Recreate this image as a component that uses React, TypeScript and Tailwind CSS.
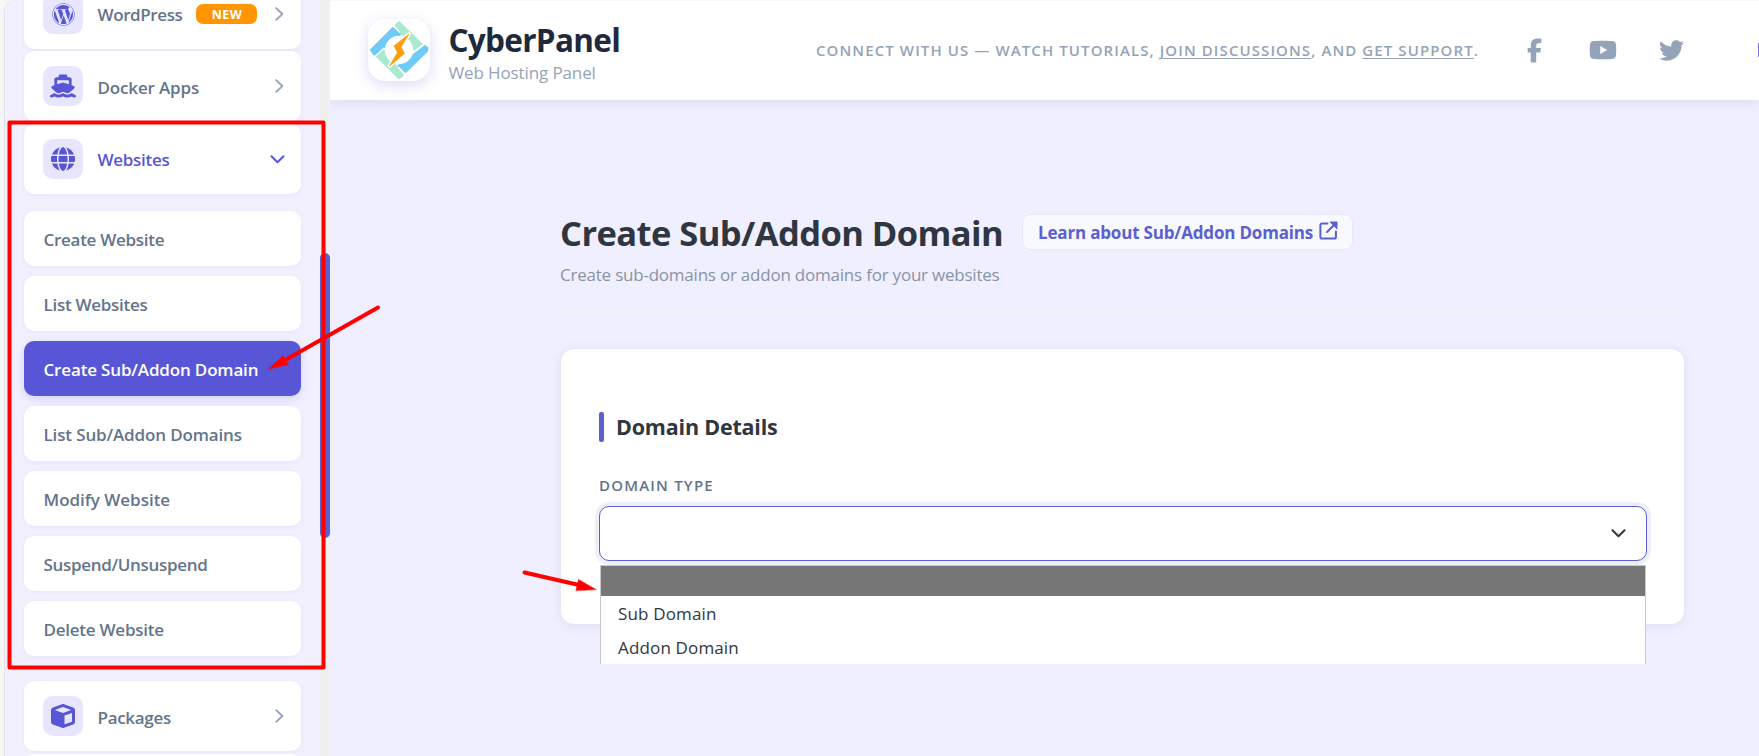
import type { ReactNode } from "react";
import {
  FaCube,
  FaFacebookF,
  FaGlobe,
  FaShip,
  FaTwitter,
  FaWordpress,
  FaYoutube,
} from "react-icons/fa6";

const submenu = [
  { label: "Create Website", tracking: "tracking-[-0.28px]" },
  { label: "List Websites", tracking: "tracking-[-0.28px]" },
  { label: "Create Sub/Addon Domain", tracking: "tracking-[-0.16px]", active: true },
  { label: "List Sub/Addon Domains", tracking: "tracking-[-0.14px]" },
  { label: "Modify Website", tracking: "tracking-[-0.03px]" },
  { label: "Suspend/Unsuspend", tracking: "tracking-[-0.32px]" },
  { label: "Delete Website", tracking: "tracking-[-0.24px]" },
];

function ChevronRight() {
  return (
    <svg className="mr-[2px] h-[14px] w-[9px]" viewBox="0 0 9 14" fill="none" stroke="#94a3b8" strokeWidth="1.8" strokeLinecap="round" strokeLinejoin="round">
      <path d="M1.2 1.2 7.4 7 1.2 12.8" />
    </svg>
  );
}

function ChevronDown({ stroke, className }: { stroke: string; className?: string }) {
  return (
    <svg className={"h-[9px] w-[15px] " + (className ?? "")} viewBox="0 0 15 9" fill="none" stroke={stroke} strokeWidth="2" strokeLinecap="round" strokeLinejoin="round">
      <path d="M1.5 1.2 7.5 7.3 13.5 1.2" />
    </svg>
  );
}

function MenuCard({ icon, label, tracking, open, badge }: { icon: ReactNode; label: string; tracking: string; open?: boolean; badge?: string }) {
  return (
    <div className="flex h-[70px] shrink-0 items-center rounded-[10px] bg-white pr-[15px] pl-[19px] shadow-[0_1px_4px_rgba(91,95,207,0.08)]">
      <div className="flex size-10 items-center justify-center rounded-[10px] bg-[#e8e6ff] text-[#5856d6]">{icon}</div>
      <span className={"ml-[14.5px] text-[17px] leading-6 font-semibold " + tracking + (open ? " pt-px text-[#5856d6]" : badge ? " pt-0.5 text-[#64748b]" : " pt-1 text-[#64748b]")}>{label}</span>
      {badge && (
        <span className="ml-[14px] flex h-5 w-[61px] items-center justify-center rounded-[7px] bg-[#ff9500] pt-px text-[12.5px] leading-5 font-bold tracking-[0.4px] text-white">{badge}</span>
      )}
      <div className="ml-auto">{open ? <ChevronDown stroke="#5856d6" className="mr-px" /> : <ChevronRight />}</div>
    </div>
  );
}

function Logo() {
  return (
    <div className="size-[62px] rounded-[17px] bg-white shadow-[0_4px_14px_rgba(91,95,207,0.22)]">
      <svg viewBox="0 0 62 62" className="size-full">
        <g strokeLinejoin="round" strokeWidth="2">
          <path d="M27.5 6.500 31 3.200 53.500 25 46.500 31.500Z" fill="#aae9cf" stroke="#aae9cf" />
          <path d="M9 37.500 15.500 31 35 56 31 59.200Z" fill="#aae9cf" stroke="#aae9cf" />
          <path d="M3 31 25 9 32 15.500 18 26 8.500 35.500 6 35.500Z" fill="#6ecbf5" stroke="#6ecbf5" />
          <path d="M57 27 59.500 29 59 32 37.500 53 30.500 46.500 44 37Z" fill="#6ecbf5" stroke="#6ecbf5" />
        </g>
        <circle cx="31" cy="31" r="14.2" fill="#fff" />
        <path d="M25.500 7 32 13.500M56.500 24.500 46 33M7 37.500 16 29M37.500 55.500 30 48" stroke="#fff" strokeWidth="1.4" />
        <path d="M41 15 26 27 29.500 33.500 21.500 47 36.500 34.500 33 28Z" fill="#ff9d0a" stroke="#fff" strokeWidth="3.6" strokeLinejoin="round" />
        <path d="M41 15 26 27 29.500 33.500 21.500 47 36.500 34.500 33 28Z" fill="#ff9d0a" stroke="#ff9d0a" strokeWidth="0.8" strokeLinejoin="round" />
      </svg>
    </div>
  );
}

function Sidebar() {
  return (
    <aside className="flex h-full w-[330px] shrink-0 bg-[#f6f6f6]">
      <div className="ml-[4px] h-full w-[316px] overflow-hidden rounded-tl-[12px] border-l border-[#e4e4e8] bg-[#f2f0ff]">
        <nav className="mt-[-21px] flex flex-col pr-[19px] pl-[19px]">
          <MenuCard icon={<FaWordpress size={23} />} label="WordPress" tracking="tracking-[-0.4px]" badge="NEW" />
          <div className="h-0.5" />
          <MenuCard icon={<FaShip size={26} />} label="Docker Apps" tracking="tracking-[-0.15px]" />
          <div className="h-[3px]" />
          <MenuCard icon={<FaGlobe size={24} />} label="Websites" tracking="tracking-[-0.28px]" open />
          <ul className="mt-[17px] mb-[25px] flex flex-col gap-2.5">
            {submenu.map((item) => (
              <li
                key={item.label}
                className={
                  "flex h-[55px] items-center rounded-[10px] pt-0.5 pl-[19.5px] text-[17px] leading-6 font-semibold whitespace-nowrap " +
                  item.tracking +
                  (item.active
                    ? " bg-[#5856d6] text-white shadow-[0_3px_10px_rgba(88,86,214,0.2)]"
                    : " bg-white text-[#64748b] shadow-[0_1px_4px_rgba(91,95,207,0.08)]")
                }
              >
                {item.label}
              </li>
            ))}
          </ul>
          <MenuCard icon={<FaCube size={24} />} label="Packages" tracking="tracking-[-0.3px]" />
          <div className="mt-[3px] h-[70px] shrink-0 rounded-[10px] bg-white" />
        </nav>
      </div>
      <div className="h-full w-2.5 bg-[#f0f0f0] pt-[253px]">
        <div className="h-[285px] rounded-[5px] bg-[#5b5fcf]" />
      </div>
    </aside>
  );
}

function Header() {
  return (
    <header className="z-10 flex h-[100px] shrink-0 items-start overflow-visible border-t border-[#f8f8f8] bg-white shadow-[0_2px_14px_rgba(0,0,0,0.09)]">
      <div className="mt-[18px] ml-[38px] shrink-0">
        <Logo />
      </div>
      <div className="mt-[23px] ml-[18.5px] w-[366.5px] shrink-0">
        <div className="text-[31.5px] leading-8 font-bold tracking-[-0.7px] text-[#1e293b]">CyberPanel</div>
        <div className="mt-[5px] text-[17px] leading-6 tracking-[-0.12px] text-[#94a3b8]">Web Hosting Panel</div>
      </div>
      <p className="mt-[37px] w-[712px] shrink-0 pl-px text-[15px] leading-6 font-semibold tracking-[1.1px] whitespace-nowrap text-[#94a3b8]">
        CONNECT WITH US — WATCH TUTORIALS, <a className="underline underline-offset-2">JOIN DISCUSSIONS</a>, AND{" "}
        <a className="underline underline-offset-2">GET SUPPORT</a>.
      </p>
      <div className="mt-[35px] flex h-7 shrink-0 items-center text-[#94a3b8]">
        <FaFacebookF className="h-[25px] w-[15px]" />
        <FaYoutube className="ml-[47px] size-7" />
        <FaTwitter className="ml-[42px] size-[25px]" />
      </div>
      <div className="mt-[42px] ml-[74px] h-[14px] w-px bg-[#7d78ee]" />
    </header>
  );
}

function ExternalIcon() {
  return (
    <svg className="mb-[3px] ml-[6px] size-[19px]" viewBox="0 0 19 19" fill="none" stroke="#5b5fcf" strokeWidth="2" strokeLinejoin="round" strokeLinecap="round">
      <path d="M8.500 2.400H3A1.600 1.600 0 0 0 1.400 4v12A1.600 1.600 0 0 0 3 17.600h12.300a1.600 1.600 0 0 0 1.600-1.600v-5.500" />
      <path d="M8 11 15.500 3.500" />
      <path d="M11.500 1h6.500v6.500Z" fill="#5b5fcf" strokeWidth="1" />
    </svg>
  );
}

function DomainCard() {
  return (
    <section className="mt-[37px] h-[277px] rounded-[14px] border border-[#e8e6ff] bg-white pt-[63px] pr-[37px] pl-[38px] shadow-[0_2px_14px_rgba(0,0,0,0.06)]">
      <div className="flex h-[30px] items-center">
        <span className="h-[30px] w-[5px] rounded-[2px] bg-[#5b5fcf]" />
        <h2 className="ml-[12px] text-[21.5px] leading-[30px] font-bold tracking-[-0.2px] text-[#2f3640]">Domain Details</h2>
      </div>
      <div className="mt-[33px] text-[15px] leading-5 font-semibold tracking-[1.2px] text-[#64748b]">DOMAIN TYPE</div>
      <div className="mt-[11px] flex h-[55px] items-center justify-end rounded-[10px] border border-[#5b5fcf] bg-white pr-[20px] shadow-[0_0_0_4px_#efeffa]">
        <ChevronDown stroke="#2f3640" />
      </div>
      <div className="relative">
        <ul className="absolute top-1 left-px h-[99px] w-[1046px] border border-b-0 border-[#c8c8c8] bg-white text-[17px] tracking-[0.15px] text-[#2f3640]">
          <li className="h-[30px] bg-[#767676]" />
          <li className="h-[34px] pl-[17px] leading-[36px]">Sub Domain</li>
          <li className="h-[34px] pl-[17px] leading-[36px]">Addon Domain</li>
        </ul>
      </div>
    </section>
  );
}

function Annotations() {
  return (
    <svg className="pointer-events-none absolute inset-0 z-20" width="1759" height="756" viewBox="0 0 1759 756" fill="none" stroke="#ff0000" strokeLinejoin="round" strokeLinecap="round">
      <rect x="9.500" y="122.500" width="314" height="545" strokeWidth="4" />
      <path d="M378 307.500 280 363" strokeWidth="4" />
      <path d="M268.500 369 283 355.500 288 364.500Z" fill="#ff0000" strokeWidth="0.500" />
      <path d="M524.500 572.500 579 585" strokeWidth="4" />
      <path d="M596 589.500 578.500 579.500 576 590.500Z" fill="#ff0000" strokeWidth="0.500" />
    </svg>
  );
}

export default function App() {
  return (
    <div className="relative flex h-[756px] w-[1759px] overflow-hidden bg-[#f0efff] font-['Open_Sans',sans-serif]">
      <Sidebar />
      <div className="flex h-full w-[1429px] flex-col overflow-hidden">
        <Header />
        <main className="ml-[230px] w-[1125px] pt-[112px]">
          <div className="flex items-start">
            <h1 className="w-[462px] text-[34.5px] leading-[42px] font-bold tracking-[-0.57px] whitespace-nowrap text-[#2f3640]">Create Sub/Addon Domain</h1>
            <a className="mt-0.5 flex h-9 w-[331px] items-center rounded-[8px] border border-[#e8e6ff] bg-[#f8f9ff] pl-[15px] text-[17px] leading-6 font-bold tracking-[-0.18px] whitespace-nowrap text-[#5b5fcf]">
              <span className="pt-0.5">Learn about Sub/Addon Domains</span>
              <ExternalIcon />
            </a>
          </div>
          <p className="mt-2 text-[17px] leading-[26px] tracking-[-0.22px] text-[#8893a7]">Create sub-domains or addon domains for your websites</p>
          <div className="mt-[22px] h-px bg-[#eeeeee]" />
          <DomainCard />
        </main>
      </div>
      <Annotations />
    </div>
  );
}
